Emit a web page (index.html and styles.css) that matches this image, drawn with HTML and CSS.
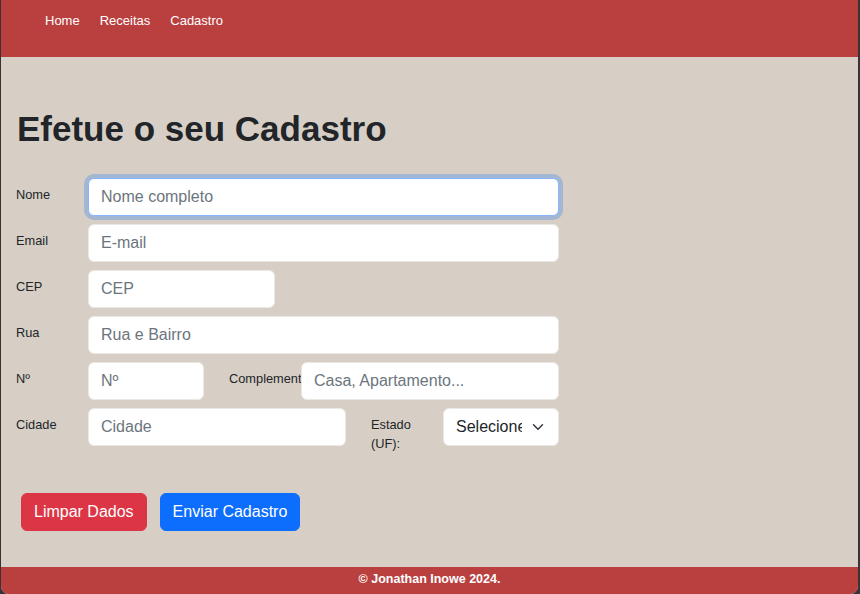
FILE: index.html
```html
<!DOCTYPE html>
<html lang="pt-BR">
<head>
<meta charset="utf-8">
<title>Cadastro</title>
<link rel="stylesheet" href="styles.css">
</head>
<body>
<div class="page">
  <nav class="navbar">
    <a class="nav-link" href="#">Home</a>
    <a class="nav-link" href="#">Receitas</a>
    <a class="nav-link" href="#">Cadastro</a>
  </nav>
  <main class="main">
    <h1 class="title">Efetue o seu Cadastro</h1>
    <form class="form">
      <div class="row">
        <label class="label" for="nome">Nome</label>
        <input class="input input-focus w-full" id="nome" type="text" placeholder="Nome completo">
      </div>
      <div class="row">
        <label class="label" for="email">Email</label>
        <input class="input w-full" id="email" type="email" placeholder="E-mail">
      </div>
      <div class="row">
        <label class="label" for="cep">CEP</label>
        <input class="input w-cep" id="cep" type="text" placeholder="CEP">
      </div>
      <div class="row">
        <label class="label" for="rua">Rua</label>
        <input class="input w-full" id="rua" type="text" placeholder="Rua e Bairro">
      </div>
      <div class="row">
        <label class="label" for="num">Nº</label>
        <input class="input w-small" id="num" type="text" placeholder="Nº">
        <label class="label label-inner clip" for="comp">Complemento</label>
        <input class="input w-half" id="comp" type="text" placeholder="Casa, Apartamento...">
      </div>
      <div class="row">
        <label class="label" for="cidade">Cidade</label>
        <input class="input w-half" id="cidade" type="text" placeholder="Cidade">
        <label class="label label-inner label-wrap" for="uf">Estado (UF):</label>
        <select class="select w-small" id="uf">
          <option>Selecione...</option>
        </select>
      </div>
      <div class="actions">
        <button type="reset" class="btn btn-danger">Limpar Dados</button>
        <button type="submit" class="btn btn-primary">Enviar Cadastro</button>
      </div>
    </form>
  </main>
  <footer class="footer">© Jonathan Inowe 2024.</footer>
</div>
</body>
</html>
```

FILE: styles.css
```css
html {
  background: #3a3336;
}

body {
  margin: 0;
  font-family: "Liberation Sans", Arial, sans-serif;
  color: #212529;
}

.page {
  margin: 0 2px 0 1px;
  height: 594px;
  display: flex;
  flex-direction: column;
  background: #d7cfc5;
  border-radius: 0 0 8px 8px;
  overflow: hidden;
}

.navbar {
  height: 57px;
  flex: none;
  background: #b9403f;
  display: flex;
  align-items: flex-start;
  gap: 20px;
  padding: 13px 0 0 44px;
  box-sizing: border-box;
}

.nav-link {
  color: #ffffff;
  text-decoration: none;
  font-size: 13px;
  line-height: 16px;
}

.main {
  flex: 1;
  padding: 51px 15px 0;
}

.title {
  margin: 0 0 28px 1px;
  font-size: 35px;
  line-height: 42px;
  font-weight: bold;
  color: #212529;
}

.form {
  margin: 0;
}

.row {
  display: flex;
  align-items: flex-start;
  margin-bottom: 8px;
}

.label {
  width: 72px;
  flex: none;
  box-sizing: border-box;
  padding-top: 7px;
  font-size: 12.8px;
  line-height: 19.2px;
  color: #212529;
}

.label-inner {
  margin-left: 25px;
}

.clip {
  white-space: nowrap;
  overflow: hidden;
}

.label-wrap {
  padding-right: 3px;
}

.input,
.select {
  flex: none;
  box-sizing: border-box;
  height: 38px;
  padding: 6px 12px;
  font-family: "Liberation Sans", Arial, sans-serif;
  font-size: 16px;
  line-height: 24px;
  color: #212529;
  background-color: #ffffff;
  border: 1px solid #ebe8e4;
  border-radius: 6px;
  outline: none;
}

.input::placeholder {
  color: #6c757d;
  opacity: 1;
}

.input-focus {
  border-color: #86b7fe;
  box-shadow: 0 0 0 4px rgba(13, 110, 253, 0.25);
}

.select {
  appearance: none;
  -webkit-appearance: none;
  padding-right: 36px;
  background-image: url("data:image/svg+xml,%3csvg xmlns='http://www.w3.org/2000/svg' viewBox='0 0 16 16'%3e%3cpath fill='none' stroke='%23343a40' stroke-linecap='round' stroke-linejoin='round' stroke-width='2' d='m2 5 6 6 6-6'/%3e%3c/svg%3e");
  background-repeat: no-repeat;
  background-position: right 12px center;
  background-size: 16px 12px;
}

.w-full {
  width: 471px;
}

.w-cep {
  width: 187px;
}

.w-small {
  width: 116px;
}

.w-half {
  width: 258px;
}

.actions {
  display: flex;
  gap: 13px;
  margin: 40px 0 0 5px;
}

.btn {
  height: 38px;
  padding: 6px 12px;
  font-family: "Liberation Sans", Arial, sans-serif;
  font-size: 16px;
  line-height: 24px;
  color: #ffffff;
  border: 1px solid transparent;
  border-radius: 6px;
  cursor: pointer;
}

.btn-danger {
  background: #dc3545;
  border-color: #dc3545;
}

.btn-primary {
  background: #0d6efd;
  border-color: #0d6efd;
}

.footer {
  flex: none;
  height: 27px;
  background: #b9403f;
  color: #ffffff;
  font-size: 12.5px;
  font-weight: bold;
  line-height: 25px;
  text-align: center;
}
```
